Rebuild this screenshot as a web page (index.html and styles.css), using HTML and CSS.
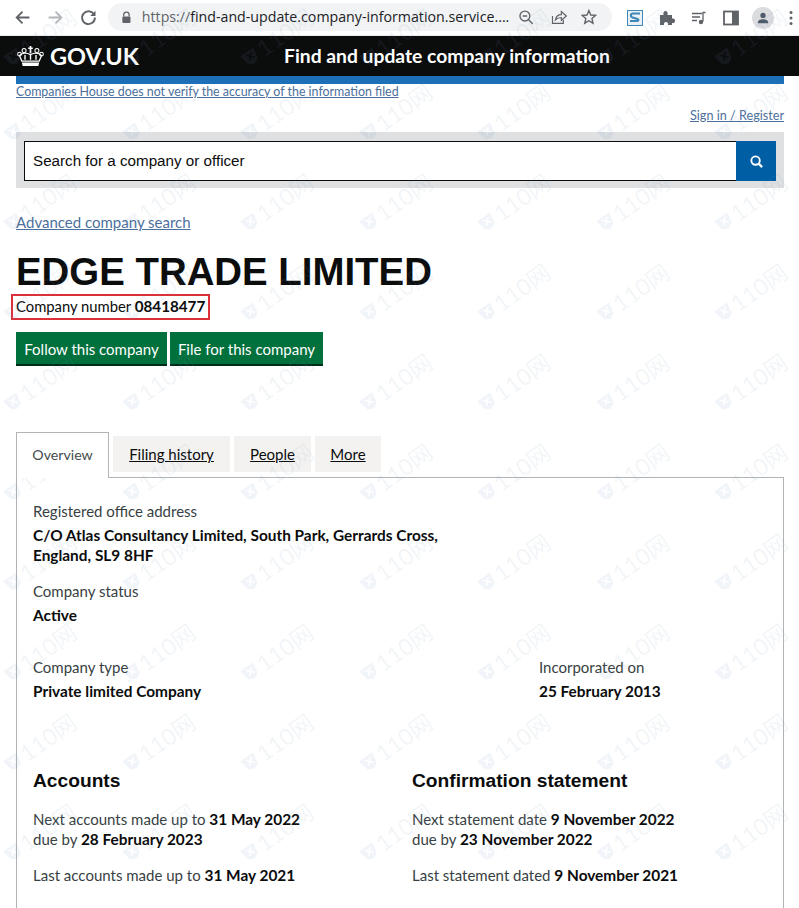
FILE: index.html
```html
<!DOCTYPE html>
<html lang="en">
<head>
    <meta charset="UTF-8">
    <meta name="viewport" content="width=device-width, initial-scale=1.0">
    <title>EDGE TRADE LIMITED - Find and update company information</title>
    <link rel="stylesheet" href="styles.css">
</head>
<body>
    <div class="browser-bar">
        <svg class="nav-icon" viewBox="0 0 16 16"><path d="M14.5 8H2.500M8 2.500 2.500 8 8 13.500" fill="none" stroke="#5f6368" stroke-width="1.700"/></svg>
        <svg class="nav-icon" viewBox="0 0 16 16"><path d="M1.500 8h12M8 2.500 13.500 8 8 13.500" fill="none" stroke="#b4b7ba" stroke-width="1.700"/></svg>
        <svg class="nav-icon" viewBox="0 0 16 16"><path d="M13.200 5.200A6 6 0 1 0 14 8" fill="none" stroke="#5f6368" stroke-width="1.800"/><path d="M14.600 1.600v5h-5z" fill="#5f6368"/></svg>
        <div class="omnibox">
            <svg class="lock" viewBox="0 0 12 14"><path d="M3 6V4a3 3 0 0 1 6 0v2" fill="none" stroke="#5f6368" stroke-width="1.400"/><rect x="1.500" y="6" width="9" height="7" rx="1" fill="#5f6368"/></svg>
            <span class="url"><span class="url-scheme">https://</span>find-and-update.company-information.service....</span>
            <svg class="omni-icon zoom-icon" viewBox="0 0 16 16"><circle cx="7" cy="7" r="5" fill="none" stroke="#5f6368" stroke-width="1.400"/><path d="M4.700 7h4.600M10.600 10.600 15 15" fill="none" stroke="#5f6368" stroke-width="1.400"/></svg>
            <svg class="omni-icon share-icon" viewBox="0 0 16 16"><path d="M1.500 7v7.500h11V11" fill="none" stroke="#5f6368" stroke-width="1.200"/><path d="M4.500 11c.5-3.500 3-5.500 6-5.500V2.500l5 4.500-5 4.500V8.500c-2.500 0-4.500.8-6 2.500z" fill="none" stroke="#5f6368" stroke-width="1.200"/></svg>
            <svg class="omni-icon" viewBox="0 0 16 16"><path d="M8 1.500 9.900 6l4.800.4-3.600 3.200 1.100 4.700L8 11.800l-4.200 2.500 1.100-4.700L1.300 6.400 6.100 6z" fill="none" stroke="#5f6368" stroke-width="1.400"/></svg>
        </div>
        <div class="toolbar">
            <svg class="tool-icon" viewBox="0 0 16 16"><rect x=".5" y=".5" width="15" height="15" fill="#e9f1f6" stroke="#3f87b5"/><path d="M13 3.500H6C3.500 3.500 3 6.500 5.500 7.500l5 1.500c1.500.5 1 2-.5 2H3" fill="none" stroke="#3f87b5" stroke-width="2.200"/></svg>
            <svg class="tool-icon" viewBox="0 0 16 16"><path d="M1 5h3.500C4 2.500 5 1 6.500 1S9 2.500 8.500 5H13v3.500c2.500-.5 3 .8 3 2.200s-.8 2.600-3 2.300V15H9c.4-2-.6-3-2-3s-2.400 1-2 3H1z" fill="#5f6368"/></svg>
            <svg class="tool-icon" viewBox="0 0 16 16"><path d="M1 3.500h10M1 7h8M1 10.500h5M14.500 2.500h-2.500v9" fill="none" stroke="#5f6368" stroke-width="1.300"/><circle cx="10" cy="12" r="2.200" fill="#5f6368"/></svg>
            <svg class="tool-icon" viewBox="0 0 16 16"><rect x="1" y="1.500" width="14" height="13" fill="none" stroke="#5f6368" stroke-width="1.800"/><rect x="9" y="2" width="6" height="12" fill="#5f6368"/></svg>
            <div class="avatar"><svg viewBox="0 0 16 16"><circle cx="8" cy="5" r="3" fill="#4f5b6b"/><path d="M2 14c0-3.500 3-4.500 6-4.500s6 1 6 4.500z" fill="#4f5b6b"/></svg></div>
            <svg class="kebab" viewBox="0 0 4 16"><circle cx="2" cy="2.500" r="1.500" fill="#5f6368"/><circle cx="2" cy="8" r="1.500" fill="#5f6368"/><circle cx="2" cy="13.500" r="1.500" fill="#5f6368"/></svg>
        </div>
    </div>

    <header class="gov-header">
        <svg class="crown" viewBox="0 0 30 24">
            <path d="M15 1v8M12.500 3.500h5" fill="none" stroke="#fff" stroke-width="1.800"/>
            <circle cx="8" cy="6" r="2.200" fill="none" stroke="#fff" stroke-width="1.100"/>
            <circle cx="22" cy="6" r="2.200" fill="none" stroke="#fff" stroke-width="1.100"/>
            <circle cx="3" cy="10" r="2" fill="none" stroke="#fff" stroke-width="1.100"/>
            <circle cx="27" cy="10" r="2" fill="none" stroke="#fff" stroke-width="1.100"/>
            <path d="M3 11.500c3-3 7-3.500 12-1 5-2.500 9-2 12 1l-2.500 6h-19z" fill="none" stroke="#fff" stroke-width="1.300"/>
            <path d="M9 11v5M15 11v5M21 11v5" fill="none" stroke="#fff" stroke-width="1.500"/>
            <path d="M5.500 19h19l-1 4h-17z" fill="#fff"/>
        </svg>
        <span class="gov-logo">GOV.UK</span>
        <span class="service-name">Find and update company information</span>
    </header>

    <main class="page">
        <div class="blue-bar"></div>
        <p class="notice"><a href="#">Companies House does not verify the accuracy of the information filed</a></p>
        <p class="sign-in"><a href="#">Sign in / Register</a></p>

        <form class="search-band">
            <div class="search-input">Search for a company or officer</div>
            <div class="search-btn">
                <svg viewBox="0 0 16 16"><circle cx="7" cy="7" r="4.500" fill="none" stroke="#fff" stroke-width="2"/><path d="M10.500 10.500 14 14" stroke="#fff" stroke-width="2.400"/></svg>
            </div>
        </form>

        <p class="advanced"><a href="#">Advanced company search</a></p>

        <h1>EDGE TRADE LIMITED</h1>
        <p class="company-number">Company number <strong>08418477</strong></p>

        <div class="actions">
            <a class="button follow" href="#">Follow this company</a>
            <a class="button file" href="#">File for this company</a>
        </div>

        <ul class="tabs">
            <li class="tab active">Overview</li>
            <li class="tab filing"><a href="#">Filing history</a></li>
            <li class="tab people"><a href="#">People</a></li>
            <li class="tab more"><a href="#">More</a></li>
        </ul>

        <section class="panel">
            <p class="label">Registered office address</p>
            <p class="value">C/O Atlas Consultancy Limited, South Park, Gerrards Cross,<br>England, SL9 8HF</p>

            <p class="label status-label">Company status</p>
            <p class="value">Active</p>

            <div class="type-row">
                <div>
                    <p class="label">Company type</p>
                    <p class="value">Private limited Company</p>
                </div>
                <div>
                    <p class="label">Incorporated on</p>
                    <p class="value">25 February 2013</p>
                </div>
            </div>

            <div class="dates">
                <div>
                    <h2>Accounts</h2>
                    <p>Next accounts made up to <strong>31 May 2022</strong><br>due by <strong>28 February 2023</strong></p>
                    <p>Last accounts made up to <strong>31 May 2021</strong></p>
                </div>
                <div>
                    <h2>Confirmation statement</h2>
                    <p>Next statement date <strong>9 November 2022</strong><br>due by <strong>23 November 2022</strong></p>
                    <p>Last statement dated <strong>9 November 2021</strong></p>
                </div>
            </div>
        </section>
    </main>

    <div class="company-box"></div>
    <div class="watermarks" id="watermarks"></div>

    <script>
        // marca d'agua repetida sobre a pagina
        const layer = document.getElementById("watermarks");
        for (let row = 0; row < 10; row++) {
            for (let col = 0; col < 7; col++) {
                const mark = document.createElement("span");
                mark.className = "mark";
                mark.style.left = (-2 + col * 118.5) + "px";
                // a primeira linha desce um pouco para nao cortar no topo
                mark.style.top = (row === 0 ? 29 : 14 + row * 90) + "px";
                mark.innerHTML = '<svg viewBox="0 0 16 16"><path fill-rule="evenodd" d="M1 3h14l-2 10-5 2.500L3 13zM5 5l2.500 3L5 11h2l1.500-2L10 11h2L9.500 8 12 5h-2L8.500 7 7 5z"/></svg>110网';
                layer.appendChild(mark);
            }
        }
    </script>
</body>
</html>
```

FILE: styles.css
```css
html, body {
    height: 908px;
    overflow: hidden;
}

body {
    margin: 0;
    font-family: 'Lato', 'Noto Sans CJK SC', sans-serif;
    font-size: 15px;
    line-height: 20px;
    color: #0b0c0c;
    background-color: #fff;
    position: relative;
}

p {
    margin: 0;
}

a {
    color: #4c6f9c;
}

strong {
    font-size: 15.400px;
}

/* browser toolbar */
.browser-bar {
    height: 36px;
    box-sizing: border-box;
    display: flex;
    align-items: center;
    padding: 0 0 0 14px;
    background-color: #fff;
    border-bottom: 1px solid #e8eaed;
}

.nav-icon {
    width: 17px;
    height: 17px;
    margin-right: 16px;
}

.omnibox {
    width: 504px;
    height: 28px;
    margin-left: -5px;
    margin-right: 15px;
    margin-top: -1px;
    padding-left: 11px;
    box-sizing: border-box;
    display: flex;
    align-items: center;
    background-color: #f1f3f4;
    border-radius: 14px;
}

.lock {
    width: 11px;
    height: 13px;
    margin-left: 2px;
    margin-right: 10px;
}

.url {
    width: 381px;
    font-family: 'Open Sans', sans-serif;
    font-size: 14.200px;
    white-space: nowrap;
    color: #202124;
}

.url-scheme {
    color: #5f6368;
}

.omni-icon {
    width: 16px;
    height: 16px;
    margin-right: 15px;
}

.zoom-icon {
    margin-right: 18px;
}

.share-icon {
    margin-right: 14px;
}

.toolbar {
    display: flex;
    align-items: center;
}

.tool-icon {
    width: 16px;
    height: 16px;
    margin-right: 16px;
}

.avatar {
    width: 22px;
    height: 22px;
    margin-left: -3px;
    border-radius: 50%;
    background-color: #dadce0;
    display: flex;
    align-items: center;
    justify-content: center;
}

.avatar svg {
    width: 14px;
    height: 14px;
}

.kebab {
    width: 4px;
    height: 16px;
    margin-left: 15px;
}

/* gov.uk header */
.gov-header {
    height: 40px;
    display: flex;
    align-items: center;
    padding-left: 16px;
    background-color: #0b0c0c;
    color: #fff;
    font-weight: 700;
}

.crown {
    width: 29px;
    height: 22px;
    margin-right: 5px;
}

.gov-logo {
    width: 234px;
    font-size: 23.500px;
}

.service-name {
    font-size: 19.300px;
}

.page {
    padding: 0 15px 0 16px;
}

.blue-bar {
    height: 8px;
    background-color: #1d70b8;
}

.notice {
    font-size: 12.400px;
    line-height: 16px;
}

.sign-in {
    margin-top: 6px;
    font-size: 12.650px;
    text-align: right;
}

.search-band {
    display: flex;
    margin-top: 6px;
    padding: 9px 8px 7px;
    background-color: #dee0e2;
}

.search-input {
    flex: 1;
    height: 40px;
    box-sizing: border-box;
    padding-left: 8px;
    border: 1px solid #0b0c0c;
    border-right: none;
    background-color: #fff;
    font-family: 'Liberation Sans', Arial, sans-serif;
    font-size: 15.200px;
    line-height: 38px;
}

.search-btn {
    width: 40px;
    height: 40px;
    display: flex;
    align-items: center;
    justify-content: center;
    background-color: #005ea5;
}

.search-btn svg {
    width: 15px;
    height: 15px;
}

.advanced {
    margin-top: 24px;
}

h1 {
    margin: 18px 0 0;
    font-family: 'Liberation Sans', Arial, sans-serif;
    font-size: 38.400px;
    line-height: 44px;
    font-weight: 700;
}

.company-number {
    margin-top: 2px;
    font-size: 14.800px;
}

.company-number strong {
    font-size: 15.200px;
}

.actions {
    display: flex;
    gap: 3px;
    margin-top: 16px;
}

.button {
    height: 32px;
    line-height: 34px;
    text-align: center;
    color: #fff;
    text-decoration: none;
    background-color: #00703c;
    box-shadow: 0 2px 0 #002d18;
}

.follow {
    width: 151px;
}

.file {
    width: 153px;
}

/* tabs */
.tabs {
    display: flex;
    align-items: flex-end;
    gap: 4px;
    margin: 68px 0 0;
    padding: 0;
    list-style: none;
}

.tab {
    height: 36px;
    line-height: 36px;
    margin-bottom: 5px;
    text-align: center;
    background-color: #f3f2f1;
}

.tab a {
    color: #0b0c0c;
}

.tab.active {
    width: 91px;
    height: 45px;
    line-height: 44px;
    margin-bottom: -1px;
    border: 1px solid #b1b4b6;
    border-bottom: none;
    background-color: #fff;
    color: #454a4c;
    font-size: 14.200px;
    position: relative;
    z-index: 1;
}

.filing {
    width: 117px;
}

.people {
    width: 77px;
}

.more {
    width: 66px;
}

/* panel */
.panel {
    height: 431px;
    box-sizing: border-box;
    padding: 23px 16px 0;
    border: 1px solid #b1b4b6;
    border-bottom: none;
}

.label {
    color: #383f43;
}

.value {
    margin-top: 4px;
    font-size: 15.400px;
    font-weight: 700;
}

.status-label {
    margin-top: 16px;
}

.type-row {
    display: grid;
    grid-template-columns: 506px 1fr;
    margin-top: 32px;
}

.dates {
    display: grid;
    grid-template-columns: 379px 1fr;
    margin-top: 68px;
}

.dates h2 {
    margin: 0;
    font-family: 'Liberation Sans', Arial, sans-serif;
    font-size: 19.200px;
    line-height: 24px;
}

.dates p {
    margin-top: 16px;
    color: #383f43;
}

.dates strong {
    color: #0b0c0c;
}

/* destaque vermelho e marca d'agua ficam por cima */
.company-box {
    position: absolute;
    left: 11px;
    top: 294px;
    width: 195px;
    height: 22px;
    border: 2px solid #dc2f37;
}

.watermarks {
    position: absolute;
    inset: 0;
    overflow: hidden;
    pointer-events: none;
}

.mark {
    position: absolute;
    display: flex;
    align-items: center;
    gap: 2px;
    font-size: 23px;
    line-height: 18px;
    white-space: nowrap;
    color: rgba(120, 150, 185, .1);
    transform: rotate(-35deg);
}

.mark svg {
    width: 18px;
    height: 18px;
    fill: rgba(120, 150, 185, .1);
}
```
